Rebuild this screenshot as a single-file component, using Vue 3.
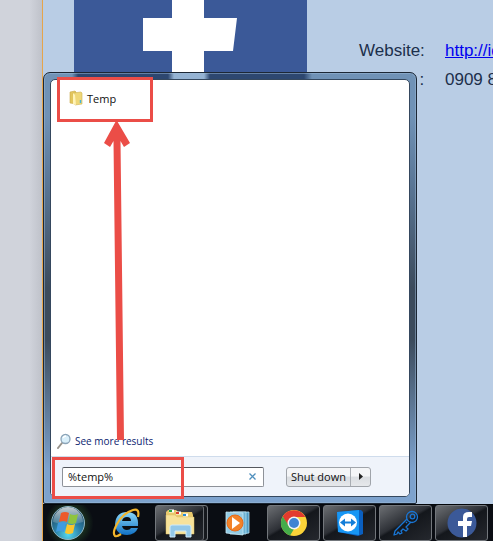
<template>
  <div class="page">
    <aside class="gutter"></aside>
    <main class="screen">
      <section class="card">
        <svg class="logo" viewBox="0 0 233 110" aria-hidden="true">
          <rect width="233" height="110" fill="#3b5998" />
          <path d="M98 0h32v18h33l-4 33h-29v59H98V51H69V18h29z" fill="#fff" />
        </svg>
        <dl class="contact">
          <template v-for="row in contact" :key="row.label">
            <dt>{{ row.label }}</dt>
            <dd>
              <a v-if="row.link" href="#">{{ row.value }}</a>
              <template v-else>{{ row.value }}</template>
            </dd>
          </template>
        </dl>
      </section>

      <div class="start-menu">
        <div class="panel">
          <div class="results">
            <a class="result" href="#">
              <svg width="14" height="16" viewBox="0 0 14 16" aria-hidden="true">
                <path d="M1 2l5-1 1 1v12l-6-1z" fill="#e3c65c" stroke="#c9aa49" stroke-width=".6" />
                <path d="M4 3l8-1 1 1v11l-7 1z" fill="#efd777" stroke="#cfb252" stroke-width=".6" />
                <path d="M6 5l1 10-3-1V3z" fill="#fff3b8" />
                <path d="M11.500 10v3" stroke="#43b5dc" stroke-width="1.4" />
              </svg>
              Temp
            </a>
            <a class="more" href="#">
              <svg width="14" height="16" viewBox="0 0 14 16" aria-hidden="true">
                <path d="M5 10L1 15" stroke="#98938b" stroke-width="2" stroke-linecap="round" />
                <circle cx="8.500" cy="6" r="4.500" fill="#d9effa" stroke="#8ba4b8" stroke-width="1.300" />
                <path d="M6 5q1-2 3-2" stroke="#fff" stroke-width="1.300" fill="none" />
              </svg>
              See more results
            </a>
          </div>
          <div class="footer">
            <div class="search">
              <input v-model="query" type="text" aria-label="Search programs and files" />
              <button class="clear" type="button" aria-label="Clear" @click="query = ''">
                <svg width="7" height="7" viewBox="0 0 7 7"><path d="M.5.500l6 6M6.500.500l-6 6" stroke="#4f8fbd" stroke-width="1.300" /></svg>
              </button>
            </div>
            <div class="power">
              <button type="button" class="shutdown">Shut down</button>
              <button type="button" class="options" aria-label="Shut down options">
                <svg width="4" height="7" viewBox="0 0 4 7"><path d="M0 0l4 3.500L0 7z" fill="#222" /></svg>
              </button>
            </div>
          </div>
        </div>
      </div>

      <nav class="taskbar" aria-label="Taskbar">
        <button class="task start" type="button" aria-label="Start">
          <svg width="36" height="36" viewBox="0 0 36 36">
            <defs>
              <radialGradient id="orb" cx=".5" cy=".85" r=".8">
                <stop offset="0" stop-color="#55d8ee" />
                <stop offset=".5" stop-color="#2b7fa5" />
                <stop offset="1" stop-color="#1d4259" />
              </radialGradient>
              <linearGradient id="shine" x2="0" y2="1">
                <stop offset="0" stop-color="#fff" stop-opacity=".75" />
                <stop offset="1" stop-color="#fff" stop-opacity=".1" />
              </linearGradient>
            </defs>
            <circle cx="18" cy="18" r="16.500" fill="url(#orb)" stroke="#8fb6c4" stroke-width="1" />
            <path d="M3 17a15 15 0 0 1 30 0q-15 5-30 0z" fill="url(#shine)" />
            <path d="M11 8q4-2 8 0l-2 9q-4-2-8 0z" fill="#ed5a2b" />
            <path d="M20 9q4 2 8 0l-2 9q-4 2-8 0z" fill="#8fc43e" />
            <path d="M8 18q4-2 8 0l-2 9q-4-2-8 0z" fill="#3f9be0" />
            <path d="M17 19q4 2 8 0l-2 9q-4 2-8 0z" fill="#fcc62c" />
          </svg>
        </button>
        <button class="task" type="button" aria-label="Internet Explorer">
          <svg width="32" height="32" viewBox="0 0 32 32">
            <defs>
              <linearGradient id="ie" x2="0" y2="1">
                <stop offset="0" stop-color="#8ad8fb" />
                <stop offset="1" stop-color="#1170c4" />
              </linearGradient>
            </defs>
            <path d="M28 19H12q1 4 5 4 3 0 4-2h7q-3 7-11 7-11 0-12-11Q6 5 17 5q12 0 11 14zM12 14h9q0-4-4-4-4 0-5 4z" fill="url(#ie)" fill-rule="evenodd" />
            <path d="M28 10q2-9-5-7-10 3-16 14-5 9-2 12 2 1 6-2" fill="none" stroke="#f3b52c" stroke-width="2.200" />
          </svg>
        </button>
        <button class="task open stacked" type="button" aria-label="Windows Explorer">
          <svg width="32" height="30" viewBox="0 0 32 30">
            <path d="M2 4l2-2h8l2 2h14l1 3v18H2z" fill="#e9c96c" />
            <path d="M5 3h5M12 5h5M19 7h5" stroke="#fff" stroke-width="3" />
            <path d="M5 3h3" stroke="#27a647" stroke-width="2" />
            <path d="M12 5h3" stroke="#dd4030" stroke-width="2" />
            <path d="M19 7h3" stroke="#268bd8" stroke-width="2" />
            <path d="M2 7h9l2 2h17v17H2z" fill="#f7e29a" stroke="#dfc16a" stroke-width=".5" />
            <path d="M6 29V19q0-2 2-2h17q2 0 2 2v10h-5v-6H11v6z" fill="#93c8e8" stroke="#cfeafa" stroke-width="1" />
          </svg>
        </button>
        <button class="task" type="button" aria-label="Media Player">
          <svg width="26" height="26" viewBox="0 0 26 26">
            <path d="M8 2h16v21l-8 1z" fill="#4d9bc4" stroke="#b7e1f3" stroke-width=".8" />
            <path d="M5 2h16v22H5z" fill="#6cb1d3" stroke="#b7e1f3" stroke-width=".8" />
            <path d="M1 2l17 1v22L1 23z" fill="#92cbe5" stroke="#c8e9f5" stroke-width=".8" />
            <circle cx="10" cy="13" r="8" fill="#f28228" stroke="#e66a19" />
            <path d="M7 7l8 6-8 6z" fill="#fff" />
          </svg>
        </button>
        <button class="task open" type="button" aria-label="Chrome">
          <svg width="28" height="28" viewBox="0 0 28 28">
            <circle cx="14" cy="14" r="13" fill="#fbd338" />
            <path d="M14 14L8 17 2.700 7.500A13 13 0 0 1 25.300 8H14z" fill="#e33b2e" />
            <path d="M2.700 7.500L9 17l5 3-4 6.500A13 13 0 0 1 2.700 7.500z" fill="#45ac4a" />
            <circle cx="14" cy="14" r="6.500" fill="#f4f4f4" />
            <circle cx="14" cy="14" r="5" fill="#3f83d2" />
          </svg>
        </button>
        <button class="task open" type="button" aria-label="TeamViewer">
          <svg width="28" height="28" viewBox="0 0 28 28">
            <path d="M1 3l24-2 2 2v22l-5 2-20-4z" fill="#0a5fc0" />
            <path d="M1 3l22-2v25L2 23z" fill="#1796f4" />
            <circle cx="12" cy="13.500" r="9" fill="#fff" />
            <path d="M4 13.500l5-4v3h6v-3l5 4-5 4v-3H9v3z" fill="#147ed8" />
          </svg>
        </button>
        <button class="task open" type="button" aria-label="Key">
          <svg width="26" height="26" viewBox="0 0 26 26" fill="none" stroke="#1976d5" stroke-width="1.300" stroke-linejoin="round">
            <circle cx="19" cy="7" r="5.500" />
            <circle cx="19.500" cy="6.500" r="2.300" />
            <path d="M14 9L2 21l-1 4 3-1 1-2 2 2 2-1-1-2 2-2 3 2 2-2-2-2 5-5M13 12l1 1" />
          </svg>
        </button>
        <button class="task open" type="button" aria-label="Facebook">
          <svg width="30" height="30" viewBox="0 0 30 30">
            <circle cx="15" cy="15" r="14.500" fill="#3b5998" />
            <path d="M16 29V18h-5v-5h5V9q0-5 6-5h3v5h-3q-2 0-2 2v2h5l-1 5h-4v11z" fill="#fff" />
          </svg>
        </button>
      </nav>

      <div class="mark mark-result"></div>
      <div class="mark mark-search"></div>
      <svg class="arrow" width="28" height="320" viewBox="0 0 28 320" aria-hidden="true">
        <path d="M13.500 0L27 23l-6 4-3.500-6L21 320h-7L10.500 21 7 27l-6-4z" fill="#eb4d47" />
      </svg>
    </main>
  </div>
</template>

<script setup>
import { ref } from 'vue'

const query = ref('%temp%')

const contact = [
  { label: 'Website:', value: 'http://id', link: true },
  { label: 'Liên hệ :', value: '0909 8' }
]
</script>

<style>
body {
  margin: 0;
}
</style>

<style scoped>
.page {
  display: grid;
  grid-template-columns: 42px 1fr;
  min-height: 100vh;
  overflow: hidden;
  font-family: "Segoe UI", "Open Sans", "Noto Sans", sans-serif;
  font-size: 11px;
  color: #111;
}
.gutter {
  background: linear-gradient(90deg, #d0d3db 70%, #bfc2ca);
}
.screen {
  position: relative;
  display: flex;
  flex-direction: column;
  min-width: 0;
  border-left: 1px solid #e5a54c;
  background: #b9cde5;
}
a {
  color: inherit;
  text-decoration: none;
}
button {
  padding: 0;
  border: 0;
  background: none;
  font: inherit;
  color: inherit;
}
svg {
  display: block;
  flex: none;
}

.card {
  flex: 1;
  display: flex;
  align-items: flex-start;
  padding-left: 31px;
  overflow: hidden;
}
.logo {
  width: 233px;
}
.contact {
  display: grid;
  grid-template-columns: 86px auto;
  row-gap: 8px;
  margin: 40px 0 0 52px;
  font: 17px/21px "Liberation Sans", Arial, sans-serif;
  color: #1c2f4b;
  white-space: nowrap;
}
.contact dd {
  margin: 0;
}
.contact a {
  color: #0000f0;
  text-decoration: underline;
}

.start-menu {
  position: absolute;
  left: 0;
  bottom: 37px;
  display: flex;
  box-sizing: border-box;
  width: 374px;
  height: 432px;
  padding: 6px;
  border: 1px solid #1c2735;
  border-radius: 7px 7px 2px 2px;
  background:
    linear-gradient(90deg, #7092b6 28px, #2d4770 34px, #2d4770 124px, #95b3d3 130px, #95b3d3 160px, #2d4770 166px, #2d4770 260px, #7092b6 268px) top / 100% 8px no-repeat,
    linear-gradient(#7092b6 10%, #5b7898 25%, #3c4b5c 50%, #3c4b5c 62%, #7da2cd 92%);
  box-shadow: inset 0 0 0 1px rgba(155, 185, 215, 0.5);
}
.panel {
  flex: 1;
  display: flex;
  flex-direction: column;
  border: 1px solid #35485e;
  border-radius: 5px;
  background: #fff;
  overflow: hidden;
}
.results {
  flex: 1;
  display: flex;
  flex-direction: column;
  justify-content: space-between;
  padding: 10px 6px 7px;
}
.result,
.more {
  display: flex;
  align-items: center;
  gap: 4px;
  height: 16px;
}
.result {
  padding-left: 12px;
}
.more {
  font-size: 10px;
  color: #0b1c70;
}
.footer {
  display: flex;
  align-items: center;
  gap: 22px;
  height: 39px;
  padding-left: 11px;
  border-top: 1px solid #cfdcec;
  background: #eff3fa;
}
.search {
  display: flex;
  align-items: center;
  box-sizing: border-box;
  width: 202px;
  height: 20px;
  border: 1px solid #8e9299;
  border-top-color: #55585e;
  border-radius: 2px;
  background: #fff;
}
.search input {
  flex: 1;
  min-width: 0;
  padding: 0 5px;
  border: 0;
  outline: 0;
  background: none;
  font: inherit;
  color: inherit;
}
.clear {
  padding: 0 7px;
}
.power {
  display: flex;
  box-sizing: border-box;
  height: 20px;
  border: 1px solid #a0a4aa;
  border-radius: 3px;
  background: linear-gradient(#f4f5f7 45%, #dadde1 50%, #e6e8eb);
}
.shutdown {
  width: 64px;
  border-right: 1px solid #a9adb3;
}
.options {
  display: grid;
  place-items: center;
  width: 19px;
}

.taskbar {
  display: flex;
  gap: 3px;
  box-sizing: border-box;
  height: 37px;
  background: #0a0d13;
  border-top: 1px solid #03060a;
}
.task {
  display: grid;
  place-items: center;
  flex: none;
  box-sizing: border-box;
  width: 53px;
  overflow: hidden;
}
.start {
  padding-right: 4px;
  background: radial-gradient(circle, #356b32, transparent 75%);
}
.open {
  border: 1px solid #73777c;
  border-radius: 3px;
  background: linear-gradient(150deg, #6c6f73, #2d3036 45%, #14171c 50%, #25282e);
}
.stacked {
  padding-right: 4px;
  box-shadow: inset -3px 0 #15181d, inset -4px 0 #686c71;
}

.mark {
  position: absolute;
  box-sizing: border-box;
  border: 3px solid #eb4d47;
  pointer-events: none;
}
.mark-result {
  left: 14px;
  bottom: 419px;
  width: 96px;
  height: 45px;
}
.mark-search {
  left: 9px;
  bottom: 42px;
  width: 132px;
  height: 42px;
}
.arrow {
  position: absolute;
  left: 60px;
  bottom: 101px;
  pointer-events: none;
}
</style>
